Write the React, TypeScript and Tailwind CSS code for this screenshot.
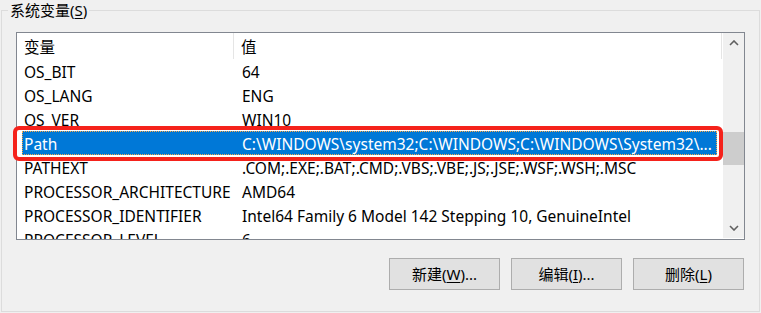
import React from "react";

const rows: [string, string][] = [
  ["OS_BIT", "64"],
  ["OS_LANG", "ENG"],
  ["OS_VER", "WIN10"],
  ["Path", "C:\\WINDOWS\\system32;C:\\WINDOWS;C:\\WINDOWS\\System32\\..."],
  ["PATHEXT", ".COM;.EXE;.BAT;.CMD;.VBS;.VBE;.JS;.JSE;.WSF;.WSH;.MSC"],
  ["PROCESSOR_ARCHITECTURE", "AMD64"],
  ["PROCESSOR_IDENTIFIER", "Intel64 Family 6 Model 142 Stepping 10, GenuineIntel"],
  ["PROCESSOR_LEVEL", "6"],
];

function Btn({ label, ul, suffix }: { label: string; ul: string; suffix: string }) {
  return (
    <button className="w-[111px] h-[32px] border border-[#adadad] bg-[#e1e1e1] text-[15px] text-[#000] flex items-center justify-center">
      {label}(<span className="underline underline-offset-2">{ul}</span>){suffix}
    </button>
  );
}

export default function App() {
  return (
    <div
      className="w-[761px] h-[313px] bg-[#f0f0f0] pt-[10px] pl-[1px] pr-[1px] pb-[1px] overflow-hidden"
      style={{ fontFamily: '"Noto Sans", "Noto Sans CJK SC", sans-serif' }}
    >
      <div className="relative h-full border border-[#dcdcdc] pt-[21px] pl-[14px] pr-[14px] flex flex-col">
        <div className="absolute left-[6px] top-[-12px] px-[2px] bg-[#f0f0f0] text-[15px] leading-[22px] text-black">
          系统变量(<span className="underline underline-offset-2">S</span>)
        </div>

        <div className="relative w-[729px] h-[208px] border border-[#828790] bg-white flex">
          <div className="w-[705px] flex flex-col overflow-hidden text-[15.5px] text-black">
            <div className="h-[26px] flex shrink-0">
              <div className="w-[217px] pl-[7px] pt-[3px] flex items-center border-r border-[#e5e5e5]">变量</div>
              <div className="flex-1 pl-[7px] pt-[3px] flex items-center border-r border-[#e5e5e5]">值</div>
            </div>
            {rows.map(([k, v]) => {
              const sel = k === "Path";
              return (
                <div key={k} className="h-[24px] shrink-0 flex pl-[5px] pr-[5px]">
                  <div
                    className={
                      "flex-1 flex items-center pt-[3px] " +
                      (sel ? "bg-[#0078d7] text-white outline outline-1 outline-dotted outline-[#f7a84a] -outline-offset-1" : "")
                    }
                  >
                    <div className="w-[212px] pl-[2px] whitespace-nowrap">{k}</div>
                    <div className="flex-1 pl-[8px] whitespace-nowrap">{v}</div>
                  </div>
                </div>
              );
            })}
          </div>
          <div className="w-[21px] h-[205px] ml-[1px] bg-[#f0f0f0] flex flex-col items-center">
            <div className="h-[20px] w-full flex items-center justify-center">
              <svg width="10" height="6" viewBox="0 0 10 6">
                <path d="M1 5 L5 1 L9 5" stroke="#606060" strokeWidth="1.6" fill="none" />
              </svg>
            </div>
            <div className="h-[79px]" />
            <div className="w-full h-[33px] bg-[#cdcdcd]" />
            <div className="flex-1" />
            <div className="h-[20px] w-full flex items-center justify-center">
              <svg width="10" height="6" viewBox="0 0 10 6">
                <path d="M1 1 L5 5 L9 1" stroke="#606060" strokeWidth="1.6" fill="none" />
              </svg>
            </div>
          </div>
          <div className="absolute left-[-4px] top-[93px] w-[710px] h-[35px] border-[4px] border-[#f5221b] rounded-[6px] pointer-events-none" />
        </div>

        <div className="flex justify-end gap-[11px] mt-[18px] pr-[1px]">
          <Btn label="新建" ul="W" suffix="..." />
          <Btn label="编辑" ul="I" suffix="..." />
          <Btn label="删除" ul="L" suffix="" />
        </div>
      </div>
    </div>
  );
}
